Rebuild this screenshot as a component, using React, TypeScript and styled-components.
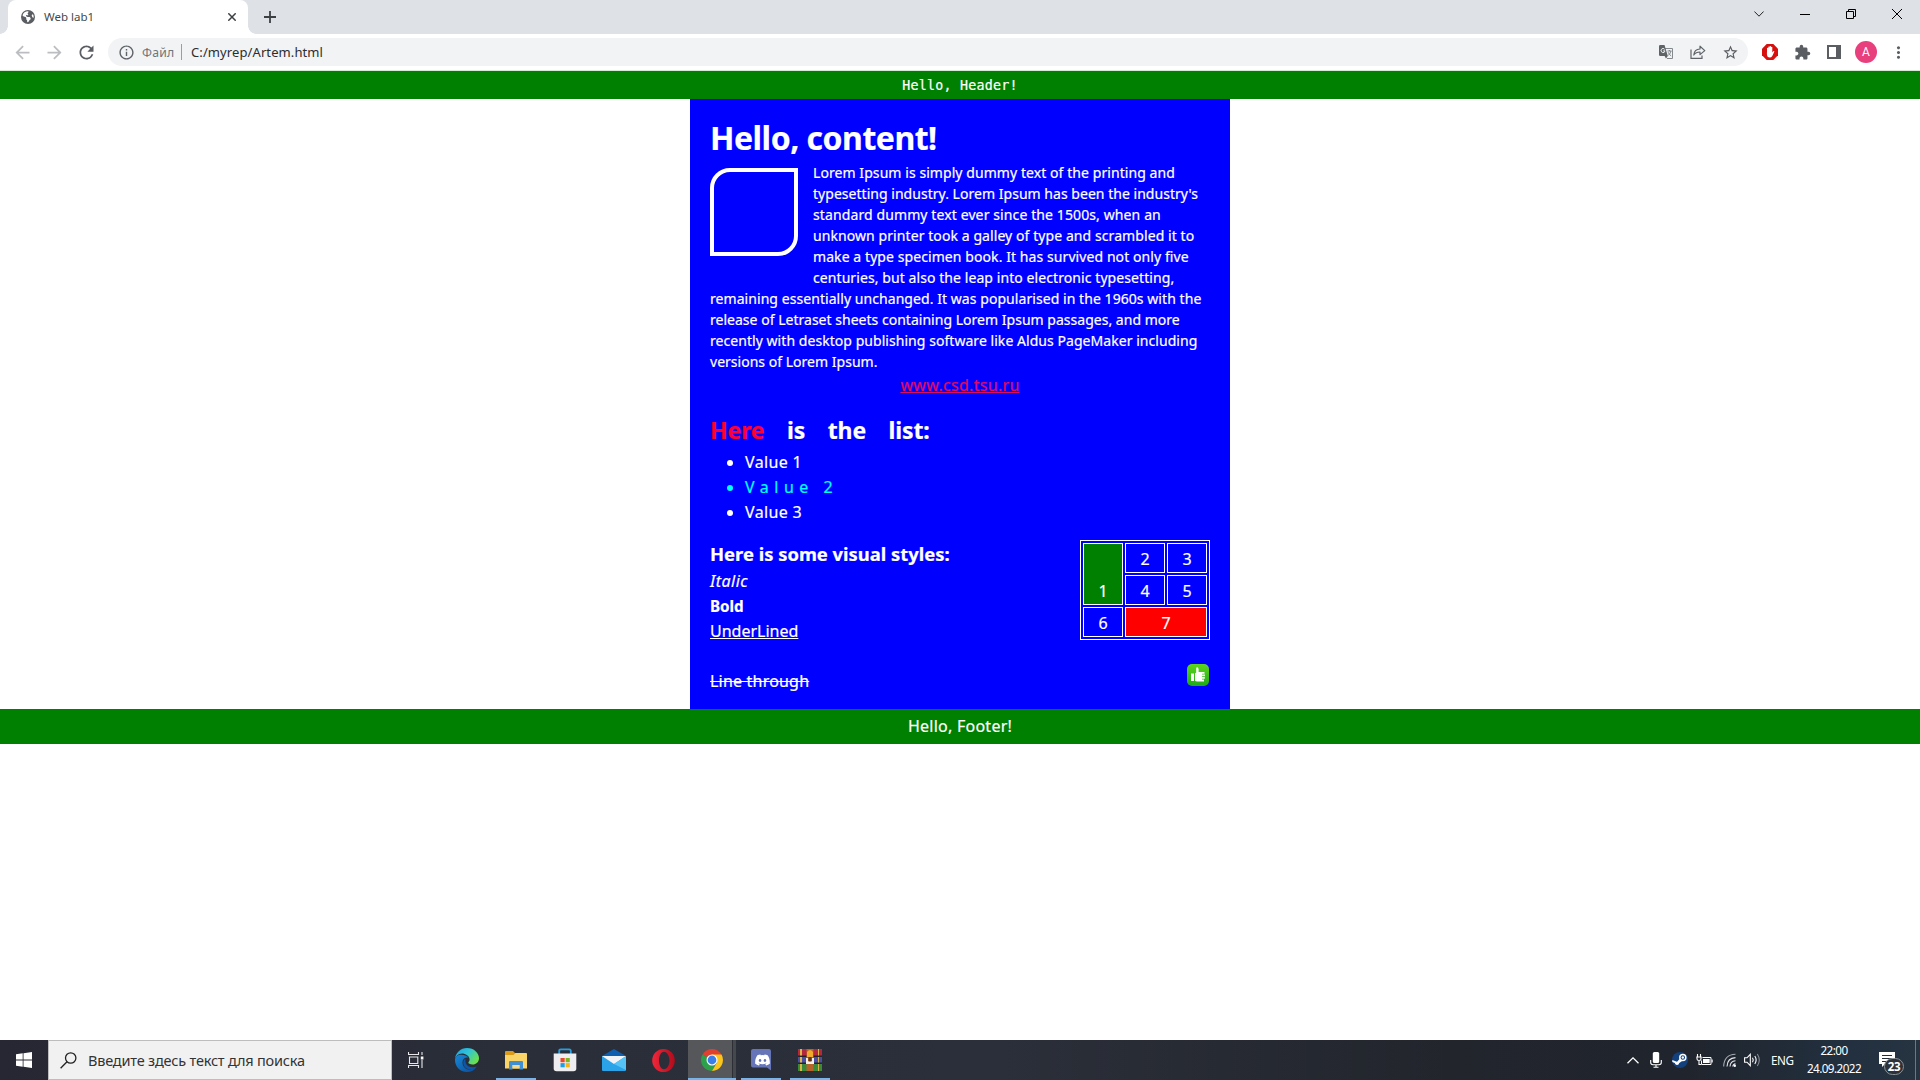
import React from 'react';
import styled, { createGlobalStyle, css } from 'styled-components';
import {
  MdArrowBack,
  MdArrowForward,
  MdRefresh,
  MdInfoOutline,
  MdStarBorder,
  MdExtension,
  MdMoreVert,
} from 'react-icons/md';
import { FaEarthAmericas, FaDiscord } from 'react-icons/fa6';

const sans = '"Noto Sans", "Open Sans", sans-serif';

const GlobalStyle = createGlobalStyle`
  * { box-sizing: border-box; }
  html, body { margin: 0; padding: 0; background: #fff; }
  body { font-family: ${sans}; overflow: hidden; }
`;

const Screen = styled.div`
  width: 1920px;
  height: 1080px;
  display: flex;
  flex-direction: column;
  overflow: hidden;
`;

/* ---------- Browser chrome ---------- */

const TabStrip = styled.div`
  height: 34px;
  flex: none;
  display: flex;
  background: #dee1e6;
  padding-left: 8px;
`;

const Tab = styled.div`
  position: relative;
  width: 240px;
  height: 34px;
  display: flex;
  align-items: center;
  padding: 0 12px 0 13px;
  background: #fff;
  border-radius: 8px 8px 0 0;
  color: #45494d;

  &::before,
  &::after {
    content: '';
    position: absolute;
    bottom: 0;
    width: 8px;
    height: 8px;
  }
  &::before {
    left: -8px;
    background: radial-gradient(circle at 0 0, #dee1e6 7.5px, #fff 8px);
  }
  &::after {
    right: -8px;
    background: radial-gradient(circle at 100% 0, #dee1e6 7.5px, #fff 8px);
  }
`;

const TabIcon = styled.span`
  display: flex;
  width: 14px;
  margin-right: 9px;
  color: #5a5e63;
`;

const TabTitle = styled.span`
  flex: 1;
  font-size: 11.5px;
  line-height: 16px;
`;

const NewTab = styled.div`
  width: 44px;
  display: flex;
  align-items: center;
  justify-content: center;
`;

const WindowButtons = styled.div`
  display: flex;
  margin-left: auto;
  height: 28px;
`;

const WindowButton = styled.div`
  width: 46px;
  display: flex;
  align-items: center;
  justify-content: center;
`;

const Toolbar = styled.div`
  height: 37px;
  flex: none;
  display: flex;
  align-items: center;
  padding: 0 6px;
  background: #fff;
  border-bottom: 1px solid #d5ead5;
`;

const ToolButton = styled.div<{ $dim?: boolean }>`
  width: 32px;
  height: 28px;
  display: flex;
  align-items: center;
  justify-content: center;
  color: ${(p) => (p.$dim ? '#bbbdc0' : '#5a5e63')};
`;

const Omnibox = styled.div`
  flex: 1;
  height: 28px;
  margin: 0 6px;
  padding: 0 2px 0 10px;
  display: flex;
  align-items: center;
  background: #f1f3f4;
  border-radius: 14px;
  color: #5f6368;
`;

const Scheme = styled.span`
  margin-left: 7px;
  width: 39px;
  font-size: 12.2px;
  letter-spacing: 0.2px;
  color: #70757a;
`;

const Divider = styled.span`
  width: 1px;
  height: 16px;
  background: #9a9da1;
  margin-right: 9px;
`;

const Url = styled.span`
  flex: 1;
  font-size: 13px;
  letter-spacing: 0.1px;
  color: #2a2d31;
`;

const Avatar = styled.span`
  width: 22px;
  height: 22px;
  border-radius: 50%;
  background: #e8407c;
  color: #fff;
  font: 12px/22px Roboto, sans-serif;
  text-align: center;
`;

/* ---------- Page ---------- */

const Page = styled.main`
  flex: 1;
  background: #fff;
  color: #fff;
  font-size: 16px;
  line-height: 25px;
  -webkit-text-stroke-width: 0.2px;
`;

const HeaderBar = styled.header`
  height: 28px;
  background: #008000;
  text-align: center;
  font: 13.3px/29px 'DejaVu Sans Mono', monospace;
  letter-spacing: 0.24px;
`;

const Content = styled.section`
  width: 540px;
  height: 610px;
  margin: 0 auto;
  padding: 21px 20px 16px;
  background: #0000ff;
  white-space: nowrap;
`;

const Title = styled.h1`
  margin: 0 0 7px;
  font-size: 32px;
  line-height: 35px;
  letter-spacing: -0.5px;
`;

const Lorem = styled.div`
  font-size: 14px;
  line-height: 21px;
  height: 210px;
`;

const Shape = styled.div`
  float: left;
  width: 88px;
  height: 88px;
  margin: 6px 15px 20px 0;
  border: 4px solid #fff;
  border-radius: 20px 0;
`;

const Line = styled.span<{ $track: number }>`
  display: block;
  letter-spacing: ${(p) => p.$track}px;
`;

const SiteLink = styled.a`
  display: block;
  padding-top: 1px;
  text-align: center;
  color: #e00a5e;
  text-decoration: underline;
  letter-spacing: 0.3px;
`;

const ListTitle = styled.h2`
  margin: 18px 0 6px;
  font-size: 23px;
  line-height: 28px;
  letter-spacing: -0.1px;
  word-spacing: 16.6px;
`;

const Red = styled.span`
  color: #ff0033;
`;

const List = styled.ul`
  margin: 0;
  padding-left: 35px;
`;

const Item = styled.li<{ $wide?: boolean }>`
  letter-spacing: 0.35px;
  ${(p) =>
    p.$wide &&
    css`
      color: #00ffff;
      letter-spacing: 5.5px;
    `}
`;

const StylesRow = styled.div`
  display: flex;
  justify-content: space-between;
  margin-top: 15px;
`;

const StylesColumn = styled.div`
  padding-top: 3px;
`;

const StylesTitle = styled.h3`
  margin: 0 0 4px;
  font-size: 18.4px;
  line-height: 22px;
`;

const Sample = styled.div<{ $kind: 'italic' | 'bold' | 'underline' | 'through' }>`
  ${(p) => p.$kind === 'italic' && 'font-style: italic; letter-spacing: 0.5px;'}
  ${(p) => p.$kind === 'bold' && 'font-weight: bold; font-size: 15.2px;'}
  ${(p) => p.$kind === 'underline' && 'text-decoration: underline;'}
  ${(p) => p.$kind === 'through' && 'text-decoration: line-through; letter-spacing: 0.2px; margin-top: 25px;'}
`;

const SideColumn = styled.div`
  display: flex;
  flex-direction: column;
  align-items: flex-end;
  gap: 24px;
`;

const Grid = styled.div`
  display: grid;
  grid-template-columns: repeat(3, 40px);
  grid-template-rows: repeat(3, 30px);
  gap: 2px;
  padding: 2px;
  border: 1px solid #fff;
`;

const Cell = styled.div<{ $bg?: string; $rows?: number; $cols?: number }>`
  display: flex;
  align-items: flex-end;
  justify-content: center;
  border: 1px solid #fff;
  background: ${(p) => p.$bg ?? 'transparent'};
  grid-row: span ${(p) => p.$rows ?? 1};
  grid-column: span ${(p) => p.$cols ?? 1};
`;

const Thumb = styled.svg`
  display: block;
  margin-right: 1px;
`;

const FooterBar = styled.footer`
  height: 35px;
  background: #008000;
  text-align: center;
  line-height: 35px;
  letter-spacing: 0.25px;
`;

/* ---------- Taskbar ---------- */

const Taskbar = styled.div`
  height: 40px;
  flex: none;
  display: flex;
  background: linear-gradient(90deg, #262733 0, #2a2e38 500px, #2b2f39 1000px, #22252c 1450px, #20242c 1680px, #22303f 1850px, #263442 1920px);
  color: #fff;
`;

const StartButton = styled.div`
  width: 48px;
  display: flex;
  align-items: center;
  justify-content: center;
`;

const Search = styled.div`
  width: 344px;
  display: flex;
  align-items: center;
  padding-left: 11px;
  background: #f1f1f1;
  border: 1px solid #bdbdbd;
  color: #333;
`;

const SearchText = styled.span`
  margin-left: 11px;
  font-size: 14.5px;
  letter-spacing: -0.2px;
`;

const Apps = styled.div`
  display: flex;
  gap: 1px;
`;

const AppButton = styled.div<{ $state?: 'open' | 'active' }>`
  width: 48px;
  height: 40px;
  display: flex;
  align-items: center;
  justify-content: center;
  ${(p) =>
    p.$state === 'open' &&
    css`
      background: linear-gradient(#77b4ea, #77b4ea) center bottom / 40px 2px no-repeat;
    `}
  ${(p) =>
    p.$state === 'active' &&
    css`
      background: linear-gradient(90deg, #55575b 44px, #2c2f36 44px, #2c2f36 45px, #45484d 45px);
      border-bottom: 2px solid #77b4ea;
      padding-top: 2px;
    `}
`;

const TaskViewButton = styled(AppButton)`
  margin-right: 2px;
`;

const Tray = styled.div`
  margin-left: auto;
  display: flex;
  align-items: center;
`;

const TrayIcon = styled.div<{ $w: number }>`
  width: ${(p) => p.$w}px;
  display: flex;
  justify-content: center;
`;

const Language = styled.div`
  width: 38px;
  padding-left: 8px;
  font-size: 11.7px;
  letter-spacing: -0.4px;
`;

const Clock = styled.div`
  width: 66px;
  text-align: center;
  font-size: 11.7px;
  line-height: 18px;
  letter-spacing: -0.55px;
  padding-bottom: 2px;
`;

const Notifications = styled.div`
  position: relative;
  width: 49px;
  height: 40px;
  border-right: 1px solid #6d7681;
  margin-right: 4px;
`;

const NoticeIcon = styled.svg`
  display: block;
  margin: 12px 0 0 12px;
`;

const Badge = styled.span`
  position: absolute;
  left: 17px;
  top: 18px;
  width: 20px;
  height: 17px;
  border: 1px solid #8b9096;
  border-radius: 9px;
  background: #2d3238;
  font: bold 11.5px/15px ${sans};
  text-align: center;
  letter-spacing: -0.3px;
`;

const LOREM: [string, number][] = [
  ['Lorem Ipsum is simply dummy text of the printing and', 0.07],
  ["typesetting industry. Lorem Ipsum has been the industry's", 0.03],
  ['standard dummy text ever since the 1500s, when an', 0.11],
  ['unknown printer took a galley of type and scrambled it to', 0.08],
  ['make a type specimen book. It has survived not only five', 0.08],
  ['centuries, but also the leap into electronic typesetting,', 0.08],
  ['remaining essentially unchanged. It was popularised in the 1960s with the', 0.06],
  ['release of Letraset sheets containing Lorem Ipsum passages, and more', 0.02],
  ['recently with desktop publishing software like Aldus PageMaker including', 0.05],
  ['versions of Lorem Ipsum.', 0.02],
];

const TranslateIcon = () => (
  <svg width="14" height="14" viewBox="0 0 14 14">
    <path d="M6 3.5h7.5v10H8" fill="none" stroke="#85898d" />
    <path d="M0 1.2Q0 0 1.2 0H5.5L8.8 11H1.2Q0 11 0 9.8Z" fill="#5f6368" />
    <path d="M5.6 11H8.8L7 13.6Z" fill="#5f6368" />
    <path d="M5.6 4.3A2 2 0 1 0 6 5.9H4.2" fill="none" stroke="#f1f3f4" strokeWidth="1" />
    <path d="M8.5 6h4M10.4 5v1M12 6q-.8 3-3 4.6M9.2 7.3q1 2.3 3 3.6" fill="none" stroke="#777b80" strokeWidth=".9" />
  </svg>
);

const ShareIcon = () => (
  <svg width="16" height="14" viewBox="0 0 16 14" fill="none" stroke="#5f6368" strokeWidth="1.2">
    <path d="M1 4.5V13.3H12V10.5" />
    <path d="M3.8 10Q4.2 4.2 10 4V1.2L14.8 5.6L10 9.6V7Q5.8 7 3.8 10Z" strokeLinejoin="round" />
  </svg>
);

const BlockerIcon = () => (
  <svg width="16" height="16" viewBox="0 0 16 16">
    <path d="M4.7 0H11.3L16 4.7V11.3L11.3 16H4.7L0 11.3V4.7Z" fill="#d5100f" />
    <path
      d="M5 7V4.3a.6.6 0 0 1 1.3 0V3.1a.65.65 0 0 1 1.300 0V2.600a.65.65 0 0 1 1.400 0v.7a.65.65 0 0 1 1.300 0V8.600l1-1.300q.7-.5 1.100.2L10.300 12Q9.300 13.600 7.800 13.600 5 13.600 4.900 10Z"
      fill="#fff"
    />
  </svg>
);

const EdgeIcon = () => (
  <svg width="24" height="24" viewBox="0 0 24 24">
    <defs>
      <linearGradient id="edgeTop" x1="0" y1="0" x2="1" y2="0.6">
        <stop offset="0" stopColor="#1f9fe0" />
        <stop offset=".5" stopColor="#2fc4d8" />
        <stop offset="1" stopColor="#6be04f" />
      </linearGradient>
      <linearGradient id="edgeLow" x1="0" y1="0" x2="1" y2="1">
        <stop offset="0" stopColor="#1689d8" />
        <stop offset="1" stopColor="#0c4a96" />
      </linearGradient>
    </defs>
    <path d="M0 12C0 4.5 6 0 12 0c7 0 12 5 12 10.200 0 3.800-3 6.300-6.300 6.300-2.800 0-4.400-1-4.400-1.900 0-.7 1.300-1.300 1.300-3.200C14.600 8 10.500 5.500 7 5.500 3 5.500 0 8.500 0 12Z" fill="url(#edgeTop)" />
    <path d="M0 12C0 8 3.400 6.500 6.500 6.700c3 .1 6 1.600 7.500 3.300-4-1.600-6.500 1-6.500 4.500 0 5 4.500 7.800 8.500 6.800 2-.5 4-1.500 5.800-2.600C19.800 22 16 24 12 24 5 24 0 18.500 0 12Z" fill="url(#edgeLow)" />
    <path d="M10.500 10.400C8 12 7.500 15 9 18c1.700 3 6 4.300 9.500 2.900 1.200-.5 2.800-1.600 3.300-2.300-4 1.600-9.300.6-10.800-3.100-.7-1.900-.6-3.700-.5-5.100Z" fill="#0e56a8" />
  </svg>
);

const ExplorerIcon = () => (
  <svg width="22" height="19" viewBox="0 0 22 19">
    <path d="M0 1Q0 0 1 0H8L10 2H20V5H0Z" fill="#dc9a17" />
    <path d="M0 4H8.500L10.500 2H21.200Q22 2 22 3V17.500H0Z" fill="#fbd467" />
    <path d="M4 18.500V11Q4 10 5 10H17Q18 10 18 11V18.500H14.500V14H7.500V18.500Z" fill="#3f8fd2" />
    <path d="M7.500 14H14.500V17.500H7.500Z" fill="#f6d98a" />
  </svg>
);

const StoreIcon = () => (
  <svg width="24" height="24" viewBox="0 0 24 24">
    <path d="M6.200 6.500V3Q6.200 1.300 7.800 1.300H16.200Q17.800 1.300 17.800 3V6.500" fill="none" stroke="#279fe0" strokeWidth="1.800" />
    <path d="M.7 5.500H23.300V20.500Q23.300 23.300 20.500 23.300H3.500Q.7 23.300 .7 20.500Z" fill="#eeeef0" />
    <path d="M7.500 10H11.700V14.200H7.500Z" fill="#e8492a" />
    <path d="M12.600 10H16.800V14.200H12.600Z" fill="#7fb51c" />
    <path d="M7.500 15.100H11.700V19.300H7.500Z" fill="#1b9fe6" />
    <path d="M12.600 15.100H16.800V19.300H12.600Z" fill="#f7b31a" />
  </svg>
);

const MailIcon = () => (
  <svg width="24" height="22" viewBox="0 0 24 22">
    <path d="M0 7L12 0L24 7V9H0Z" fill="#0f5fb0" />
    <path d="M0 7H24V21Q24 22 23 22H1Q0 22 0 21Z" fill="#2ba3e8" />
    <path d="M0 7H24L12 15Z" fill="#f1f3f6" />
    <path d="M24 7V21L12 15Z" fill="#55c3f5" />
  </svg>
);

const OperaIcon = () => (
  <svg width="23" height="23" viewBox="0 0 23 23">
    <defs>
      <linearGradient id="opera" x1="0" y1="0" x2="1" y2="0">
        <stop offset="0" stopColor="#f0273a" />
        <stop offset="1" stopColor="#b00c1c" />
      </linearGradient>
    </defs>
    <path
      fillRule="evenodd"
      d="M11.500 0A11.300 11.500 0 0 1 11.500 23A11.300 11.500 0 0 1 11.500 0ZM12 2.800C8.800 2.800 7 7 7 11.500S8.800 20.200 12 20.200 17.500 16 17.500 11.500 15.200 2.800 12 2.800Z"
      fill="url(#opera)"
    />
  </svg>
);

const ChromeIcon = () => (
  <svg width="22" height="22" viewBox="0 0 22 22">
    <path d="M11 11L1.500 5.500A11 11 0 0 1 20.500 5.500Z" fill="#e0402f" />
    <path d="M11 11L1.500 5.500A11 11 0 0 0 11 22L15.500 13.500Z" fill="#2da14a" />
    <path d="M11 5.500H20.500A11 11 0 0 1 11 22L15.800 13.800Z" fill="#fbc51c" />
    <circle cx="11" cy="11" r="5.500" fill="#fff" />
    <circle cx="11" cy="11" r="4.400" fill="#3b7ee8" />
  </svg>
);

const DiscordIcon = () => (
  <svg width="20" height="22" viewBox="0 0 20 22">
    <path d="M2 0H18Q20 0 20 2V21.500L16 18.500H2Q0 18.500 0 16.500V2Q0 0 2 0Z" fill="#6675b8" />
    <FaDiscord x="3.500" y="3" width="13" height="13" color="#fff" />
  </svg>
);

const WinrarIcon = () => (
  <svg width="24" height="22" viewBox="0 0 24 22">
    <path d="M0 0H24V7H0Z" fill="#b3273f" />
    <path d="M0 7.500H24V14H0Z" fill="#4b4fa3" />
    <path d="M0 14.500H24V22H0Z" fill="#3a8a3c" />
    <path d="M0 6.500H24V8H0ZM0 13.500H24V15H0Z" fill="#26232e" />
    <path d="M2 0H4V6.500H2ZM20 0H21V6.500H20ZM2 8H4V13.500H2ZM20 8H21V13.500H20ZM2 15H4V22H2ZM20 15H21V22H20Z" fill="#d9b54a" />
    <path d="M8.500 0H15.500V22H8.500Z" fill="#b8632a" />
    <path d="M9 3Q12 -1 15 3V8H9Z" fill="#f0ab2c" />
    <path d="M8 9H10V12H14V9H16V15H8Z" fill="#f2efe9" />
    <path d="M10.500 8H13.500V12.500H10.500Z" fill="#5c3418" />
  </svg>
);

export default function App() {
  return (
    <Screen>
      <GlobalStyle />
      <TabStrip>
        <Tab>
          <TabIcon>
            <FaEarthAmericas size={14} />
          </TabIcon>
          <TabTitle>Web lab1</TabTitle>
          <svg width="8" height="8" viewBox="0 0 8 8" stroke="#3c4043" strokeWidth="1.500">
            <path d="M.3 .3L7.700 7.700M7.700 .3L.3 7.700" />
          </svg>
        </Tab>
        <NewTab>
          <svg width="12" height="12" viewBox="0 0 12 12" stroke="#3c4043" strokeWidth="1.800">
            <path d="M6 0V12M0 6H12" />
          </svg>
        </NewTab>
        <WindowButtons>
          <WindowButton>
            <svg width="10" height="6" viewBox="0 0 10 6" fill="none" stroke="#222">
              <path d="M.4 .5L5 5.200L9.600 .5" />
            </svg>
          </WindowButton>
          <WindowButton>
            <svg width="10" height="2" viewBox="0 0 10 2">
              <path d="M0 1H10V2H0Z" fill="#000" />
            </svg>
          </WindowButton>
          <WindowButton>
            <svg width="10" height="10" viewBox="0 0 10 10" fill="none" stroke="#000">
              <path d="M.5 2.500H7.500V9.500H.5ZM2.500 2.500V.5H9.500V7.500H7.500" />
            </svg>
          </WindowButton>
          <WindowButton>
            <svg width="10" height="10" viewBox="0 0 10 10" stroke="#000">
              <path d="M0 0L10 10M10 0L0 10" />
            </svg>
          </WindowButton>
        </WindowButtons>
      </TabStrip>

      <Toolbar>
        <ToolButton $dim>
          <MdArrowBack size={21} />
        </ToolButton>
        <ToolButton $dim>
          <MdArrowForward size={21} />
        </ToolButton>
        <ToolButton>
          <MdRefresh size={21} />
        </ToolButton>
        <Omnibox>
          <MdInfoOutline size={17} />
          <Scheme>Файл</Scheme>
          <Divider />
          <Url>C:/myrep/Artem.html</Url>
          <ToolButton>
            <TranslateIcon />
          </ToolButton>
          <ToolButton>
            <ShareIcon />
          </ToolButton>
          <ToolButton>
            <MdStarBorder size={17} />
          </ToolButton>
        </Omnibox>
        <ToolButton>
          <BlockerIcon />
        </ToolButton>
        <ToolButton>
          <MdExtension size={17} />
        </ToolButton>
        <ToolButton>
          <svg width="14" height="14" viewBox="0 0 14 14">
            <path fillRule="evenodd" d="M0 0H14V14H0ZM2 2V12H9V2Z" fill="#5a5e63" />
          </svg>
        </ToolButton>
        <ToolButton>
          <Avatar>A</Avatar>
        </ToolButton>
        <ToolButton>
          <MdMoreVert size={19} />
        </ToolButton>
      </Toolbar>

      <Page>
        <HeaderBar>Hello, Header!</HeaderBar>
        <Content>
          <Title>Hello, content!</Title>
          <Lorem>
            <Shape />
            {LOREM.map(([text, track]) => (
              <Line key={text} $track={track}>
                {text}
              </Line>
            ))}
          </Lorem>
          <SiteLink>www.csd.tsu.ru</SiteLink>
          <ListTitle>
            <Red>Here</Red> is the list:
          </ListTitle>
          <List>
            <Item>Value 1</Item>
            <Item $wide>Value 2</Item>
            <Item>Value 3</Item>
          </List>
          <StylesRow>
            <StylesColumn>
              <StylesTitle>Here is some visual styles:</StylesTitle>
              <Sample $kind="italic">Italic</Sample>
              <Sample $kind="bold">Bold</Sample>
              <Sample $kind="underline">UnderLined</Sample>
              <Sample $kind="through">Line through</Sample>
            </StylesColumn>
            <SideColumn>
              <Grid>
                <Cell $bg="#008000" $rows={2}>1</Cell>
                <Cell>2</Cell>
                <Cell>3</Cell>
                <Cell>4</Cell>
                <Cell>5</Cell>
                <Cell>6</Cell>
                <Cell $bg="#ff0000" $cols={2}>7</Cell>
              </Grid>
              <Thumb width="22" height="22" viewBox="0 0 22 22">
                <defs>
                  <linearGradient id="thumb" x1="0" y1="0" x2="0" y2="1">
                    <stop offset="0" stopColor="#5fd61c" />
                    <stop offset="1" stopColor="#1faa1a" />
                  </linearGradient>
                </defs>
                <rect width="22" height="22" rx="5" fill="url(#thumb)" />
                <path
                  d="M4 9.500H7V17H4ZM8 9.500L9.200 8.500V4.500Q9.200 3.300 10.200 3.300T11.600 5V8H17.500V9.800H15V10.500H18V12.300H15V13H17.800V14.800H15V15.500H17V17.500H10L8 17Z"
                  fill="#fff"
                />
              </Thumb>
            </SideColumn>
          </StylesRow>
        </Content>
        <FooterBar>Hello, Footer!</FooterBar>
      </Page>

      <Taskbar>
        <StartButton>
          <svg width="16" height="16" viewBox="0 0 16 16" fill="#fff">
            <path d="M0 2.200L6.700 1.300V7.600H0ZM7.500 1.200L16 0V7.600H7.500ZM0 8.400H6.700V14.700L0 13.800ZM7.500 8.400H16V16L7.500 14.800Z" />
          </svg>
        </StartButton>
        <Search>
          <svg width="17" height="17" viewBox="0 0 17 17" fill="none" stroke="#222" strokeWidth="1.300">
            <circle cx="10.700" cy="6" r="5.200" />
            <path d="M7 9.800L.6 16.300" />
          </svg>
          <SearchText>Введите здесь текст для поиска</SearchText>
        </Search>
        <Apps>
          <TaskViewButton>
            <svg width="16" height="16" viewBox="0 0 16 16" fill="none" stroke="#e8e8ea" strokeWidth="1.100">
              <path d="M.5 0V2.500H10.500V0M1.500 5H9.800V11.500H1.500ZM.5 16V13.500H10.500V16M14 0V3M14 8V16" />
              <path d="M12.800 4.500H15.400V7.500H12.800Z" fill="#fff" stroke="none" />
            </svg>
          </TaskViewButton>
          <AppButton><EdgeIcon /></AppButton>
          <AppButton $state="open"><ExplorerIcon /></AppButton>
          <AppButton><StoreIcon /></AppButton>
          <AppButton><MailIcon /></AppButton>
          <AppButton><OperaIcon /></AppButton>
          <AppButton $state="active"><ChromeIcon /></AppButton>
          <AppButton $state="open"><DiscordIcon /></AppButton>
          <AppButton $state="open"><WinrarIcon /></AppButton>
        </Apps>
        <Tray>
          <TrayIcon $w={22}>
            <svg width="12" height="7" viewBox="0 0 12 7" fill="none" stroke="#fff" strokeWidth="1.300">
              <path d="M.5 6.300L6 .9L11.500 6.300" />
            </svg>
          </TrayIcon>
          <TrayIcon $w={24}>
            <svg width="12" height="16" viewBox="0 0 12 16">
              <rect x="2.800" width="6.400" height="11" rx="1.500" fill="#fff" />
              <path d="M.7 8V10.500Q.7 12.700 3 12.700H9Q11.300 12.700 11.300 10.500V8M6 12.500V15.300M3.500 15.300H8.500" fill="none" stroke="#fff" strokeWidth="1.100" />
            </svg>
          </TrayIcon>
          <TrayIcon $w={24}>
            <svg width="16" height="16" viewBox="0 0 16 16">
              <circle cx="8" cy="8" r="8" fill="#12417e" />
              <circle cx="10.800" cy="5.500" r="3" fill="none" stroke="#fff" strokeWidth="1.500" />
              <circle cx="10.800" cy="5.500" r="1.200" fill="#fff" />
              <path d="M.3 8L5 9.800L8 6.500L10.500 8.700L7.300 11Q6.800 13.200 4.800 13Q3 12.600 2.800 11L.3 10Z" fill="#fff" />
            </svg>
          </TrayIcon>
          <TrayIcon $w={25}>
            <svg width="17" height="12" viewBox="0 0 17 12">
              <path d="M1.500 0V2.500M4.500 0V2.500M.3 3H5.700M1 3V5Q1 6.500 3 6.500T5 5V3M3 6.500V10.500H5" fill="none" stroke="#fff" strokeWidth="1.100" />
              <path d="M6.500 3.500H15V10.500H5.500V6.500" fill="none" stroke="#fff" />
              <path d="M7 5H13.700V9H7ZM15.500 5.500H16.700V8.500H15.500Z" fill="#fff" />
            </svg>
          </TrayIcon>
          <TrayIcon $w={25}>
            <svg width="14" height="14" viewBox="0 0 14 14" fill="none" stroke="#e5e7e9" strokeWidth="1.100">
              <path d="M.7 13.500Q1 1.700 12.500 1.300" stroke="#a5aab0" />
              <path d="M4 13.500Q4.300 5 12.500 4.600M7 13.500Q7.300 8.200 12.500 7.800" />
              <path d="M9.800 13.500Q10 11 12.500 10.700" />
              <circle cx="11.800" cy="12.700" r="1.200" fill="#fff" stroke="none" />
            </svg>
          </TrayIcon>
          <TrayIcon $w={21}>
            <svg width="17" height="14" viewBox="0 0 17 14" fill="none" stroke="#fff" strokeWidth="1.100">
              <path d="M.6 4.800H3L6.300 1.300V12.700L3 9.200H.6Z" />
              <path d="M8.500 4.800Q10 7 8.500 9.200M10.800 3Q13.500 7 10.800 11" />
              <path d="M13.300 1Q17.300 7 13.300 13" stroke="#858b92" />
            </svg>
          </TrayIcon>
          <Language>ENG</Language>
          <Clock>
            22:00
            <br />
            24.09.2022
          </Clock>
          <Notifications>
            <NoticeIcon width="16" height="15" viewBox="0 0 16 15">
              <path d="M0 0H16V12H6L3 15V12H0Z" fill="#fff" />
              <path d="M3 3.500H13M3 6.500H13M3 9.500H9" stroke="#242c37" />
            </NoticeIcon>
            <Badge>23</Badge>
          </Notifications>
        </Tray>
      </Taskbar>
    </Screen>
  );
}
